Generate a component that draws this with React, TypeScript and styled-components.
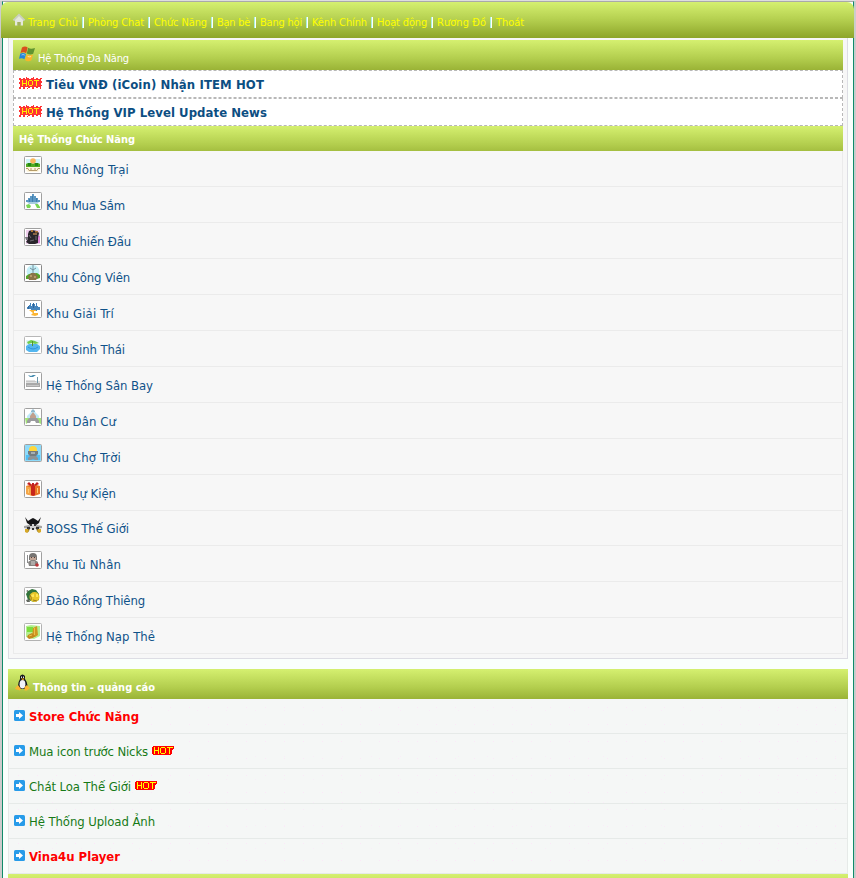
import React, { useLayoutEffect, useRef, useState } from "react";
import styled, { createGlobalStyle, css } from "styled-components";

const Global = createGlobalStyle`
  * { box-sizing: border-box; }
  html, body { margin: 0; padding: 0; }
  body {
    height: 878px; overflow: hidden; background: #cccccc;
    font-family: "DejaVu Sans Condensed", "DejaVu Sans", Tahoma, sans-serif;
    font-size: 13px; font-stretch: condensed;
  }
  svg { display: block; flex: none; }
`;

const barGradient = css`
  background: linear-gradient(#d5f070, #b2cd4d 52%, #8da52a) 0 0 / 100% 36px no-repeat;
`;

const Page = styled.div`
  height: 878px; padding: 0 2px; overflow: hidden;
  border-top: 1px solid #dedede;
`;
const Sheet = styled.div`
  height: 877px;
  border-top: 1px solid #a9a9a9;
  border-left: 1px solid #108c69;
  border-right: 1px solid #108c69;
  background: #fafffc;
  display: flex; flex-direction: column; align-items: stretch;
`;
const NavBar = styled.nav`
  ${barGradient}
  flex: none; height: 36px; margin: 0 -1px 0 -2px; padding: 0 0 0 11px;
  border-radius: 7px 7px 0 0;
  display: flex; align-items: flex-start;
  font-size: 11px; line-height: 14px; color: #fff;
`;
const NavIcon = styled.span`
  width: 16px; padding-top: 9px;
`;
const NavItem = styled.span`
  display: flex; padding-top: 14px;
`;
const NavLink = styled.a`
  color: #ffff00; cursor: pointer;
`;
const Divider = styled.span`
  width: 2px; height: 11px; margin: 1px 4px 0;
  background: linear-gradient(90deg, #a9f0dc 50%, #ffffff 50%);
`;

const Panel = styled.section`
  flex: none; width: 840px; margin-left: 5px; padding: 2px 4px 4px;
  border: 1px solid #dddde4; border-top: 0; background: #f7f7f7;
`;
const Bar = styled.header<{ $h: number; $bold?: boolean; $pad: number; $top: number }>`
  ${barGradient}
  height: ${p => p.$h}px; padding: ${p => p.$top}px 0 0 ${p => p.$pad}px;
  display: flex; align-items: flex-start;
  color: #fff; font-size: 11px; line-height: 14px;
  font-weight: ${p => (p.$bold ? 700 : 400)};
`;
const BarText = styled.span<{ $top?: number; $left?: number }>`
  margin: ${p => p.$top || 0}px 0 0 ${p => p.$left || 0}px;
`;
const HotRow = styled.div`
  height: 28px; padding: 5px 0 0 5px; display: flex; gap: 4px;
  border: 1px dashed #b8b8b8; background: #fff;
  color: #0c4e82; font-weight: 700; line-height: 18px;
`;
const AreaList = styled.ul`
  list-style: none; margin: 0; padding: 0;
  border: solid #ebebeb; border-width: 0 1px;
`;
const AreaRow = styled.li<{ $short?: boolean }>`
  height: ${p => (p.$short ? 35 : 36)}px; padding: ${p => (p.$short ? 6 : 5)}px 0 0 10px;
  display: flex; gap: 4px; border-bottom: 1px solid #ebebeb;
  color: #105289; line-height: 18px;
`;
const AreaText = styled.span<{ $short?: boolean }>`
  padding-top: ${p => (p.$short ? 3 : 5)}px;
`;
const AdPanel = styled.section`
  flex: none; width: 840px; margin: 10px 0 0 5px;
`;
const AdList = styled.ul`
  list-style: none; margin: 0; padding: 0;
  border: solid #e6eae8; border-width: 0 1px;
  background-color: #f5f7f6;
  background-image:
    radial-gradient(circle, #fbe9f8 0.6px, transparent 0.9px),
    radial-gradient(circle, #f9edf8 0.6px, transparent 0.9px);
  background-size: 19px 17px, 29px 23px;
`;
const AdRow = styled.li<{ $strong?: boolean }>`
  height: 35px; padding: 8px 0 0 5px; display: flex;
  border-bottom: 1px solid #e6eae8; line-height: 18px;
  color: ${p => (p.$strong ? "#ff0000" : "#177a17")};
  font-weight: ${p => (p.$strong ? 700 : 400)};
`;
const AdText = styled.span`
  margin: 1px 4px 0 4px;
`;
const IconTop = styled.span<{ $y: number }>`
  padding-top: ${p => p.$y}px;
`;
const NextBar = styled.div`
  ${barGradient}
  height: 30px;
`;
const Fitted = styled.span`
  display: inline-block; white-space: nowrap; vertical-align: top;
`;

/* Tracks a label out or in so that it takes the given width. */
function Fit({ w, children }: { w: number; children: string }) {
  const ref = useRef<HTMLSpanElement>(null);
  const [spacing, setSpacing] = useState(0);
  useLayoutEffect(() => {
    if (ref.current) {
      const natural = ref.current.getBoundingClientRect().width;
      setSpacing((w - natural) / children.length);
    }
  }, [w, children]);
  return <Fitted ref={ref} style={{ letterSpacing: `${spacing}px` }}>{children}</Fitted>;
}

const HomeIcon = () => (
  <svg width="14" height="16" viewBox="0 0 14 16">
    <path d="M1.500 9.500 7 4l5.500 5.500" fill="none" stroke="#c9cfbf" strokeWidth="2.200" />
    <path d="M3 9l4-4 4 4v5.500H8.500V11h-3v3.500H3z" fill="#e4e8dc" />
    <path d="M5.500 11h3v3.500h-3z" fill="#a3b063" />
  </svg>
);
const WindowsIcon = () => (
  <svg width="16" height="16" viewBox="0 0 16 16">
    <path d="M3 1.500C5 0 7 .2 8.700 1.500L7.200 7.300C5.300 6 3.600 6 1.500 7z" fill="#d9501e" />
    <path d="M9.200 1.800c2 1.300 4.200 1 6.800.2L14.200 7.800c-2 1-4.300.8-6.400-.3z" fill="#5f9430" />
    <path d="M1.300 7.500C3.300 6.600 5.200 6.700 7 8L5.400 13.300C3.700 12 2 11.900 0 12.700z" fill="#2484dc" />
    <path d="M7.600 8.200c2 1.200 4 1.200 6.400.3l-1.600 5.800c-2.200 1.600-4.300 1.300-6.400-.2z" fill="#f7b52a" />
    <path d="M2.600 9c1.300-.6 2.200-.4 3.100.1M8.700 10.500c1.300.4 2.200.4 3.400.1" stroke="#fff" strokeOpacity=".6" fill="none" />
  </svg>
);
const HotBurst = () => (
  <svg width="23" height="13" viewBox="0 0 23 13" shapeRendering="crispEdges">
    <path d="M1 2h21v8H1zM0 1h2v2H0zM4 1h2v1H4zM8 1h2v1H8zM7 0h1v2H7zM12 1h2v1h-2zM14 0h1v2h-1zM17 1h2v1h-2zM21 1h2v1h-2zM0 5h1v2H0zM22 4h1v2h-1zM0 10h2v2H0zM4 10h2v2H4zM9 10h2v1H9zM8 11h1v1H8zM13 10h2v2h-2zM17 10h2v1h-2zM21 10h1v2h-1zM22 8h1v1h-1z" fill="#ff3333" />
    <path d="M3.500 3v6M7.500 3v6M4 6h3M10 3.500h3M10 8.500h3M9.500 4v4M13.500 4v4M15 3.500h5M17.500 4v5" fill="none" stroke="#fff000" />
  </svg>
);
const HotTag = () => (
  <svg width="23" height="11" viewBox="0 0 23 11" shapeRendering="crispEdges">
    <path d="M1 1h21v3h-1v1h-1v4h-1v1H1V9H0V2h1z" fill="#ff0000" />
    <path d="M2.500 2v7M6.500 2v7M3 5.500h3M9 2.500h4M8.500 3v5M13.500 3v5M9 8.500h4M15 2.500h6M17.500 3v6" fill="none" stroke="#ffff00" />
  </svg>
);
const ArrowIcon = () => (
  <svg width="11" height="11" viewBox="0 0 11 11">
    <rect width="11" height="11" rx="1.500" fill="#279be9" />
    <path d="M2 4h3V2l4 3.500L5 9V7H2z" fill="#fff" />
  </svg>
);
const TuxIcon = () => (
  <svg width="15" height="17" viewBox="0 0 15 17">
    <path d="M5 2Q7.500-1 10 2v3q3 4 2.500 8l-2.500 2H5l-2-3q0-4 2-7z" fill="#15181c" />
    <ellipse cx="7.500" cy="10.200" rx="2.900" ry="4.200" fill="#f1f2fa" />
    <path d="M6 2.500h1v1.500H6zM8 2.500h1v1.500H8z" fill="#dedede" />
    <path d="M6 4.500h3.500L8 6.500z" fill="#f5a321" />
    <path d="M3 11l3 4-1 1.500L0 15l1-2zM12 11l3 3-3 2.500H9.500V13z" fill="#f9b632" />
  </svg>
);

const Frame = ({ children, stroke = "#a0a0a0" }: { children: React.ReactNode; stroke?: string }) => (
  <svg width="18" height="18" viewBox="0 0 18 18">
    <rect x=".5" y=".5" width="17" height="17" rx="1" fill="#fff" stroke={stroke} />
    {children}
  </svg>
);

const icons: Record<string, React.ReactNode> = {
  farm: (
    <Frame>
      <path d="M2 3h14v5H2z" fill="#d0f4f8" />
      <circle cx="9" cy="5" r="2.800" fill="#fbb659" />
      <path d="M2 8l2-1h3l2 1 2-1h3l2 1v3H2z" fill="#51a91f" />
      <path d="M4 7h3v3H4zM11 7h3v3h-3z" fill="#258817" />
      <path d="M2 11h14v3l-2 2H3l-1-2z" fill="#fff6de" />
      <path d="M2 12.500h2l1 2h8l1-2h2M7 12v2M11 12v2" stroke="#b59c68" fill="none" />
    </Frame>
  ),
  shop: (
    <Frame>
      <path d="M2 10V8h2V6h2V4h2V2h2v2h2v2h2v2h2v2z" fill="#5d98c4" />
      <path d="M5.500 7v4M8.500 4v6M12.500 6v4" stroke="#3f7fae" />
      <path d="M3 10h12l-2 2H5z" fill="#a8cde0" />
      <path d="M2 13l3-1 2 2-1 2H3zM11 12h3l2 3v1h-3z" fill="#78d551" />
    </Frame>
  ),
  battle: (
    <Frame>
      <path d="M2 2h14v14H2z" fill="#f0d0ee" />
      <path d="M11 8h5v7h-5z" fill="#df84db" />
      <path d="M4 6l1-3 3-1 5 1 2 2-1 5v5l-3 1H5l-3-2 2-3z" fill="#29262c" />
      <path d="M7 2h2v2H7zM11 3h3v1.500h-3z" fill="#b0783a" />
      <path d="M9 5h4v2H9z" fill="#8c6747" />
      <path d="M5 7l2 3M6 13l4-1M12 8v4" stroke="#6f6b75" fill="none" />
      <path d="M1 9h3v3H2z" fill="#75737a" />
    </Frame>
  ),
  park: (
    <Frame stroke="#888">
      <circle cx="9" cy="7.500" r="6.500" fill="#c5f0f8" />
      <path d="M2 12l3-2 8-1 3 2v3l-3 1H2z" fill="#55a62a" />
      <path d="M7 9h4l3 4-2 3H5l-1-3z" fill="#8a7449" />
      <path d="M9 1v8M6 4l3 2 3-2" stroke="#74929f" fill="none" />
      <path d="M6 11h2v2H6zM10 12h2v2h-2z" fill="#b69c68" />
    </Frame>
  ),
  fun: (
    <Frame>
      <path d="M3 9V7h2V5h1V3h1v3h1V4h3v2h1V3h1v3h1v1h2v3h-3v1H7V9z" fill="#4585bd" />
      <path d="M4.500 6v3M9.500 3v5" stroke="#2f669c" />
      <path d="M5 10h7v1h-2v2h4v2l-3 1-4-1 2-2z" fill="#fcb533" />
    </Frame>
  ),
  nature: (
    <Frame stroke="#b7b7b7">
      <path d="M2 4h14v5H2z" fill="#e1f5f9" />
      <path d="M2 10l3-2h8l3 2v3l-3 3H5l-3-2z" fill="#53b6ef" />
      <path d="M4 11q5 4 10 0" stroke="#2c93dc" fill="none" />
      <path d="M3 6l4-2 4 1 4 2-4 1-3-1-4 1z" fill="#70cc4e" />
      <path d="M8.500 5v5" stroke="#53942d" />
    </Frame>
  ),
  airport: (
    <Frame>
      <path d="M4 3l3 1 2-1h3l-3 2H6z" fill="#438aae" />
      <path d="M2 8h9v1h5v3H2z" fill="#dfe0e0" />
      <path d="M2 11h14v4H2z" fill="#a9a9a9" />
      <path d="M2 9.500h10M3 13.500h12" stroke="#c8c8c8" fill="none" />
      <path d="M13.500 5v6" stroke="#6f97aa" />
    </Frame>
  ),
  homes: (
    <Frame>
      <path d="M3 8l6-6 6 6v4H3z" fill="#bfe9f8" />
      <path d="M6 8l3-4 3 4v3H6z" fill="#c0a08e" />
      <path d="M7 3l2-2 2 2v1H7z" fill="#8eb9cf" />
      <path d="M1 10h4v4l-3 2zM13 10h4v6l-4-2z" fill="#a4e478" />
      <path d="M5 10h8l2 3v2h-3l-1-2H7l-1 2H3v-2z" fill="#9a9b9e" />
    </Frame>
  ),
  market: (
    <Frame>
      <path d="M1 1h16v16H1z" fill="#8edbfa" />
      <path d="M2 11h14v5H2z" fill="#51bdf2" />
      <path d="M5 6q0-4 4-4t4 4v1H5z" fill="#ffd63a" />
      <path d="M4 7h10v3l-2 2H6l-2-2z" fill="#737c80" />
      <path d="M7 8h4v2H7z" fill="#a5afb3" />
      <path d="M4 14l2-2h6l2 2v2h-3l-2-1-2 1H4z" fill="#8c9498" />
    </Frame>
  ),
  gift: (
    <Frame>
      <path d="M2 6l7-2 7 2v8l-6 2-8-2z" fill="#e97425" />
      <path d="M2 6l6 2v8l-6-2z" fill="#f4a548" />
      <path d="M7 6h4v9l-2 1-2-1z" fill="#c8251b" />
      <path d="M8 5L5 2 3 4l4 2zM10 5l3-3 2 2-4 2zM8 3h2v3H8z" fill="#c11e20" />
      <path d="M4.500 9v4M13.500 8v5" stroke="#ffcc72" />
    </Frame>
  ),
  boss: (
    <svg width="18" height="17" viewBox="0 0 18 17">
      <path d="M1 0l3 4 3-2 2-1 2 1 3 2 3-4-2 6-3 2H6L3 6z" fill="#151517" />
      <path d="M0 9l5-1 4 2 4-2 5 1v2l-5 1H5l-5-1z" fill="#a4a4a4" />
      <path d="M6 7h6v4l-2 2H8l-2-2z" fill="#d2d2d2" />
      <path d="M6 7h2v2H6zM10 7h2v2h-2zM3 10h3v2H3zM12 10h3v2h-3zM8 11h2v2H8z" fill="#343336" />
      <path d="M5 12l-2 3M13 12l2 3" stroke="#5c542e" strokeWidth="2" />
      <path d="M1 12h3l1 2-2 2-2-1zM17 12h-3l-1 2 2 2 2-1z" fill="#d7a928" />
    </svg>
  ),
  prison: (
    <Frame>
      <path d="M5 6q0-4 4-4t4 4v3H5z" fill="#777573" />
      <path d="M6 6h6v3l-2 1H8l-2-1z" fill="#c2a595" />
      <path d="M7 6.500h1M10 6.500h1" stroke="#513f3c" />
      <path d="M4 11l3-2h4l3 2v4H5z" fill="#858381" />
      <path d="M7 10h4v4H7z" fill="#adaaa8" />
      <path d="M3.500 4v8" stroke="#8a8a8b" />
      <circle cx="13" cy="14" r="1.800" fill="#bb3438" />
    </Frame>
  ),
  dragon: (
    <Frame stroke="#b2b2b2">
      <path d="M2 7l2-3 4-2 4 1 3 4v6l-5 2-6-2z" fill="#32733b" />
      <path d="M2 4l2-1v2zM2 13l3-1 1 3H3z" fill="#62675f" />
      <circle cx="10.500" cy="10" r="5" fill="#eac629" />
      <path d="M7 8l3-1v3H8zM12 7h2v3h-2z" fill="#ffe659" />
      <path d="M6 8q2 3 1 5M9 13l4 1" stroke="#9a781e" fill="none" />
    </Frame>
  ),
  card: (
    <Frame stroke="#b2b2b2">
      <path d="M2 3l5-1 9 1v10l-6 3-8-2z" fill="#b4ef91" />
      <path d="M3 4h6v5H3z" fill="#7bdd3e" />
      <path d="M9 5l4-2 1 9-3 2H8z" fill="#cf971f" />
      <path d="M4 12l4-2 3 3-2 2-4 1-2-2z" fill="#c28a1c" />
      <path d="M10.500 5v7M5 13l3-1" stroke="#edbd49" />
    </Frame>
  ),
};

const nav: [string, number][] = [
  ["Trang Chủ", 50], ["Phòng Chat", 56], ["Chức Năng", 53], ["Bạn bè", 33], ["Bang hội", 42],
  ["Kênh Chính", 55], ["Hoạt động", 50], ["Rương Đồ", 49], ["Thoát", 28],
];
const areas: [string, string, number][] = [
  ["farm", "Khu Nông Trại", 83], ["shop", "Khu Mua Sắm", 79], ["battle", "Khu Chiến Đấu", 85],
  ["park", "Khu Công Viên", 84], ["fun", "Khu Giải Trí", 68], ["nature", "Khu Sinh Thái", 79],
  ["airport", "Hệ Thống Sân Bay", 107], ["homes", "Khu Dân Cư", 70], ["market", "Khu Chợ Trời", 75],
  ["gift", "Khu Sự Kiện", 70], ["boss", "BOSS Thế Giới", 83], ["prison", "Khu Tù Nhân", 75],
  ["dragon", "Đảo Rồng Thiêng", 99], ["card", "Hệ Thống Nạp Thẻ", 109],
];
const ads: { text: string; w: number; strong?: boolean; hot?: boolean }[] = [
  { text: "Store Chức Năng", w: 110, strong: true },
  { text: "Mua icon trước Nicks", w: 119, hot: true },
  { text: "Chát Loa Thế Giới", w: 102, hot: true },
  { text: "Hệ Thống Upload Ảnh", w: 126 },
  { text: "Vina4u Player", w: 91, strong: true },
];

export default function App() {
  return (
    <>
      <Global />
      <Page>
        <Sheet>
          <NavBar>
            <NavIcon><HomeIcon /></NavIcon>
            {nav.map(([label, w], i) => (
              <NavItem key={label}>
                {i > 0 && <Divider />}
                <NavLink><Fit w={w}>{label}</Fit></NavLink>
              </NavItem>
            ))}
          </NavBar>
          <Panel>
            <Bar $h={30} $pad={6} $top={6}>
              <WindowsIcon />
              <BarText $top={6} $left={3}><Fit w={91}>Hệ Thống Đa Năng</Fit></BarText>
            </Bar>
            <HotRow><IconTop $y={1}><HotBurst /></IconTop><Fit w={218}>Tiêu VNĐ (iCoin) Nhận ITEM HOT</Fit></HotRow>
            <HotRow><IconTop $y={1}><HotBurst /></IconTop><Fit w={221}>Hệ Thống VIP Level Update News</Fit></HotRow>
            <Bar $h={25} $pad={6} $top={7} $bold><Fit w={116}>Hệ Thống Chức Năng</Fit></Bar>
            <AreaList>
              {areas.map(([icon, label, w]) => (
                <AreaRow key={label} $short={icon === "boss"}>
                  {icons[icon]}
                  <AreaText $short={icon === "boss"}><Fit w={w}>{label}</Fit></AreaText>
                </AreaRow>
              ))}
            </AreaList>
          </Panel>
          <AdPanel>
            <Bar $h={30} $pad={7} $top={5} $bold>
              <TuxIcon />
              <BarText $top={7} $left={3}><Fit w={122}>Thông tin - quảng cáo</Fit></BarText>
            </Bar>
            <AdList>
              {ads.map(a => (
                <AdRow key={a.text} $strong={a.strong}>
                  <IconTop $y={3}><ArrowIcon /></IconTop>
                  <AdText><Fit w={a.w}>{a.text}</Fit></AdText>
                  {a.hot && <IconTop $y={3}><HotTag /></IconTop>}
                </AdRow>
              ))}
            </AdList>
            <NextBar />
          </AdPanel>
        </Sheet>
      </Page>
    </>
  );
}
